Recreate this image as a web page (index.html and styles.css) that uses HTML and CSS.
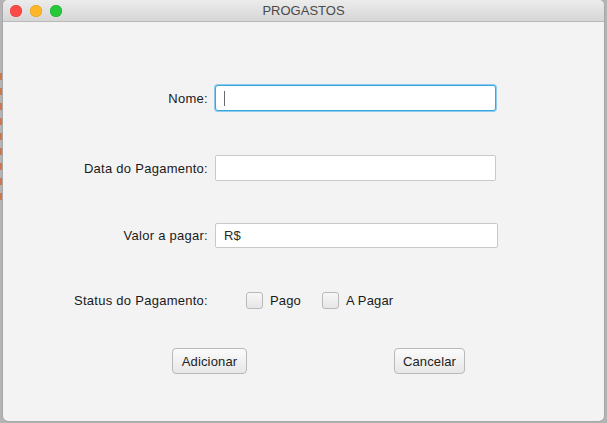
FILE: index.html
```html
<!DOCTYPE html>
<html lang="pt">
<head>
<meta charset="utf-8">
<title>PROGASTOS</title>
<link rel="stylesheet" href="styles.css">
</head>
<body>
<div class="window">
  <div class="titlebar">
    <div class="lights">
      <span class="light red"></span>
      <span class="light yellow"></span>
      <span class="light green"></span>
    </div>
    <div class="title">PROGASTOS</div>
    <div class="spacer"></div>
  </div>
  <div class="content">
    <div class="row row-nome">
      <label class="label">Nome:</label>
      <div class="input focused"><span class="caret"></span></div>
    </div>
    <div class="row row-data">
      <label class="label">Data do Pagamento:</label>
      <div class="input"></div>
    </div>
    <div class="row row-valor">
      <label class="label">Valor a pagar:</label>
      <div class="input wide"><span class="value">R$</span></div>
    </div>
    <div class="row row-status">
      <label class="label">Status do Pagamento:</label>
      <div class="checks">
        <span class="check"><span class="box"></span><span class="check-text">Pago</span></span>
        <span class="check"><span class="box"></span><span class="check-text">A Pagar</span></span>
      </div>
    </div>
    <div class="buttons">
      <button class="btn btn-add">Adicionar</button>
      <button class="btn btn-cancel">Cancelar</button>
    </div>
  </div>
</div>
</body>
</html>
```
FILE: styles.css
```css
html, body {
  margin: 0;
  padding: 0;
}
body {
  width: 607px;
  height: 423px;
  overflow: hidden;
  font-family: "Liberation Sans", Arial, sans-serif;
  font-size: 13px;
  color: #1a1a1a;
  background:
    repeating-linear-gradient(to bottom, #cf7550 0 7px, transparent 7px 15px) no-repeat 0 73px / 2px 128px,
    #b4b4b4;
}
.window {
  margin-left: 3px;
  width: 601px;
  height: 421px;
  background: #f3f3f3;
  border-radius: 5px;
  overflow: hidden;
  box-shadow: 0 0 0 0.5px #9a9a9a;
}
.titlebar {
  height: 21px;
  display: grid;
  grid-template-columns: 1fr auto 1fr;
  align-items: center;
  background: linear-gradient(to bottom, #ececec, #d6d6d6);
  border-bottom: 1px solid #b9b9b9;
}
.lights {
  display: flex;
  gap: 8px;
  padding-left: 7px;
}
.light {
  width: 12px;
  height: 12px;
  border-radius: 50%;
  display: block;
}
.red { background: #fc4a46; box-shadow: inset 0 0 0 0.5px #de3a36; }
.yellow { background: #fdb626; box-shadow: inset 0 0 0 0.5px #de9d1c; }
.green { background: #27c83a; box-shadow: inset 0 0 0 0.5px #1faa2e; }
.title {
  color: #4a4a4a;
  font-size: 13px;
}
.content {
  padding-top: 63px;
}
.row {
  display: flex;
  align-items: center;
  height: 26px;
}
.label {
  width: 205px;
  text-align: right;
  margin-right: 7px;
  flex: none;
  letter-spacing: 0.27px;
}
.row-data { margin-top: 44px; }
.row-valor { margin-top: 41px; }
.row-status { margin-top: 39px; }
.input {
  box-sizing: border-box;
  width: 281px;
  height: 26px;
  background: #fff;
  border: 1px solid #c9c9c9;
  border-radius: 2px;
  display: flex;
  align-items: center;
  padding-left: 8px;
}
.input.wide {
  width: 283px;
  height: 25px;
}
.input.focused {
  border: 1px solid #3aa6de;
  box-shadow: 0 0 0 1px #8ccbee;
  border-radius: 3px;
}
.caret {
  display: block;
  width: 1px;
  height: 15px;
  background: #6a6a6a;
}
.value {
  color: #2a2a2a;
}
.checks {
  display: flex;
  align-items: center;
  margin-left: 31px;
  gap: 21px;
}
.check {
  display: flex;
  align-items: center;
  gap: 7px;
  letter-spacing: 0.15px;
}
.box {
  box-sizing: border-box;
  width: 17px;
  height: 17px;
  border: 1px solid #b9b9b9;
  border-radius: 3px;
  background: linear-gradient(to bottom, #f7f7f7, #e6e6e6);
  display: block;
}
.buttons {
  display: flex;
  margin-top: 35px;
  padding-left: 169px;
  gap: 147px;
}
.btn {
  box-sizing: border-box;
  height: 26px;
  border: 1px solid #b9b9b9;
  border-radius: 4px;
  background: linear-gradient(to bottom, #fbfbfb, #e7e7e7);
  font-family: "Liberation Sans", Arial, sans-serif;
  font-size: 13px;
  color: #222;
  padding: 0;
  letter-spacing: 0.15px;
}
.btn-add { width: 75px; }
.btn-cancel { width: 71px; }
```
